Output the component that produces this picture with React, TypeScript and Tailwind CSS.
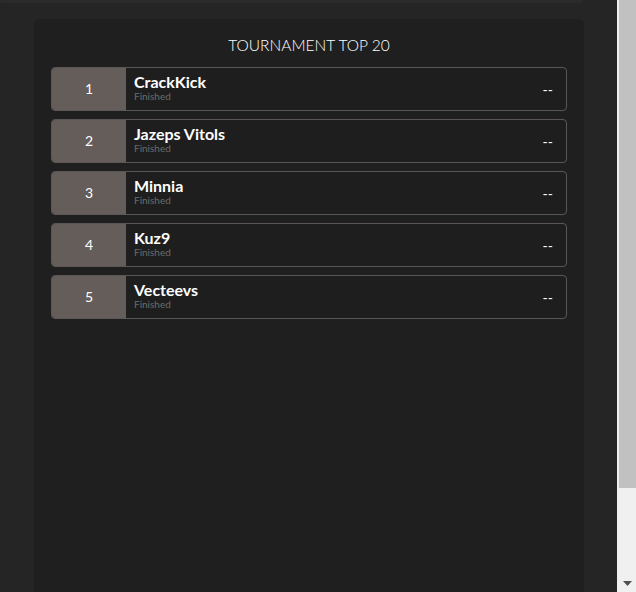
const players = [
  { rank: 1, name: "CrackKick" },
  { rank: 2, name: "Jazeps Vitols" },
  { rank: 3, name: "Minnia" },
  { rank: 4, name: "Kuz9" },
  { rank: 5, name: "Vecteevs" },
];

function Scrollbar() {
  return (
    <div className="flex h-[592px] w-[19px] shrink-0 flex-col bg-[#f0f0f0] pl-[2px]">
      <div className="h-[488px] w-full bg-[#c1c1c1]" />
      <div className="flex-1" />
      <div className="flex h-[17px] items-center justify-center">
        <svg width="9" height="5" viewBox="0 0 9 5">
          <path d="M0 0h9L4.5 5z" fill="#505050" />
        </svg>
      </div>
    </div>
  );
}

export default function App() {
  return (
    <div className="flex h-[592px] w-[636px] overflow-hidden bg-[#252525] font-['Lato','Liberation_Sans',sans-serif]">
      <div className="flex w-[617px] flex-col">
        <div className="h-[3px] w-[583px] rounded-b-[4px] bg-[#2b2b2b]" />
        <div className="ml-[34px] mt-[16px] h-[600px] w-[550px] rounded-t-[6px] bg-[#1f1f1f] px-[17px] pt-[16px]">
          <h2 className="text-center text-[15.5px] font-light leading-[20px] text-white">TOURNAMENT TOP 20</h2>
          <div className="mt-[12px] flex flex-col gap-[8px]">
            {players.map((p) => (
              <div key={p.rank} className="flex h-[44px] overflow-hidden rounded-[4px] border border-[#5c5656] bg-[#1e1e1e]">
                <div className="flex w-[74px] items-center justify-center bg-[#655d5a] text-[14px] text-white">
                  {p.rank}
                </div>
                <div className="flex flex-1 flex-col justify-center pb-[3px] pl-[8px]">
                  <div className="text-[16px] font-bold leading-[18px] text-white">{p.name}</div>
                  <div className="text-[10px] leading-[11px] text-[#6b6b6b]">Finished</div>
                </div>
                <div className="flex items-center pr-[13px] pt-[2px] text-[14px] text-white">--</div>
              </div>
            ))}
          </div>
        </div>
      </div>
      <Scrollbar />
    </div>
  );
}
